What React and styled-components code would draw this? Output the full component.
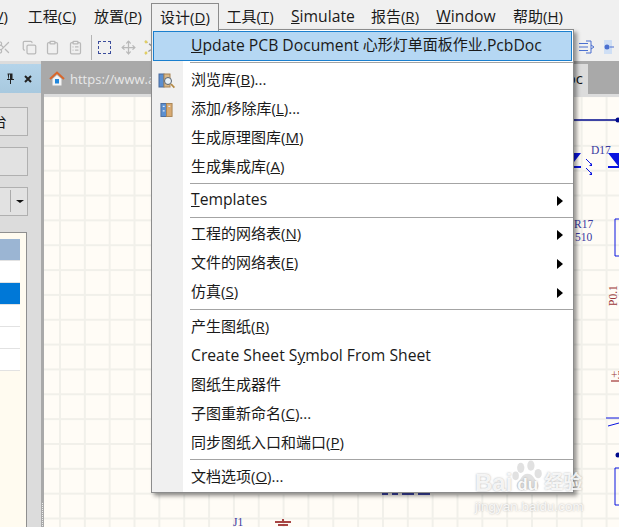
import React from 'react';
import styled, { createGlobalStyle } from 'styled-components';
import { Scissors, Copy, Clipboard, ClipboardList, Move } from 'lucide-react';

const GlobalStyle = createGlobalStyle`
	html, body {
		margin: 0;
		padding: 0;
		overflow: hidden;
		background: #f0f0f0;
	}
`;

const uiFont = `'Open Sans', 'Noto Sans CJK SC', sans-serif`;

const Page = styled.div`
	position: relative;
	width: 619px;
	height: 527px;
	overflow: hidden;
	display: flex;
	flex-direction: column;
	font-family: ${uiFont};
	color: #1a1a1a;
	background: #f0f0f0;
`;

const Latin = styled.span`
	font-size: 15.7px;
	vertical-align: -1px;
`;

const MenuBar = styled.div`
	height: 32px;
	flex: none;
	box-sizing: border-box;
	padding-bottom: 1px;
	display: flex;
	align-items: center;
	gap: 16px;
	margin-left: -13px;
	font-size: 15px;
	white-space: nowrap;
`;

const MenuTitle = styled.span`
	display: block;
	width: ${(p) => p.$width}px;
	text-align: center;
`;

const Toolbar = styled.div`
	height: 29px;
	flex: none;
	box-sizing: border-box;
	padding: 1px 5px 0 0;
	display: flex;
	align-items: center;
	gap: 8px;
	color: #b9b9b9;
`;

const CutIcon = styled(Scissors)`
	margin: 0 3px 0 -4px;
`;

const MoveIcon = styled(Move)`
	margin-left: 2px;
`;

const ToolbarDivider = styled.span`
	width: 1px;
	height: 25px;
	background: #b4b4b4;
`;

const SelectRect = styled.span`
	width: 13px;
	height: 13px;
	box-sizing: border-box;
	margin-left: -2px;
	border: 1px dashed #3b4c9c;
`;

const RightTools = styled.div`
	margin-left: auto;
	display: flex;
	align-items: center;
	gap: 9px;
`;

const Main = styled.div`
	flex: 1;
	min-height: 0;
	display: flex;
`;

const SidePanel = styled.aside`
	width: 41px;
	flex: none;
	display: flex;
	flex-direction: column;
	background: #dcdcdc;
	padding-top: 3px;
	box-sizing: border-box;
`;

const PanelTitle = styled.div`
	height: 29px;
	flex: none;
	display: flex;
	align-items: center;
	justify-content: flex-end;
	gap: 10px;
	padding-right: 9px;
	background: linear-gradient(180deg, #b4d4ea, #a8c9df);
	font-size: 11px;
	color: #222;
`;

const PanelButton = styled.div`
	width: 28px;
	height: 29px;
	margin-top: ${(p) => p.$top}px;
	flex: none;
	box-sizing: border-box;
	border: 1px solid #b0b0b0;
	border-left: 0;
	background: #e2e2e2;
	display: flex;
	align-items: center;
	overflow: hidden;
	font-size: 15px;
	padding-bottom: 2px;
`;

const ClippedLabel = styled.span`
	margin-left: -8px;
`;

const DropCaret = styled.span`
	width: 0;
	height: 0;
	margin: 2px 5px 0 5px;
	border-left: 4px solid transparent;
	border-right: 4px solid transparent;
	border-top: 3px solid #111;
`;

const CaretDivider = styled.span`
	width: 1px;
	height: 22px;
	margin-left: 10px;
	background: #fff;
	border-left: 1px solid #aaa;
`;

const ListBox = styled.div`
	width: 27px;
	flex: 1;
	margin-top: 16px;
	box-sizing: border-box;
	border: 1px solid #8f8f8f;
	border-left: 0;
	border-bottom: 0;
	background: #fffbf0;
	padding: 6px 6px 0 0;
`;

const ListRow = styled.div`
	height: 22px;
	box-sizing: border-box;
	background: ${(p) => p.$bg};
	border-bottom: 1px solid #e2e2e2;
`;

const Splitter = styled.div`
	width: 3px;
	flex: none;
	background:
		repeating-linear-gradient(180deg, #eee 0 1px, transparent 1px 2px) center bottom / 1px 24px no-repeat,
		#a9a9a9;
`;

const Document = styled.div`
	flex: 1;
	min-width: 0;
	display: flex;
	flex-direction: column;
`;

const TabStrip = styled.div`
	height: 33px;
	flex: none;
	display: flex;
	background: #a9a9a9;
`;

const HomeTab = styled.div`
	display: flex;
	align-items: center;
	gap: 5px;
	padding: 2px 0 0 5px;
	font-size: 13px;
	color: #e8e8e8;
	white-space: nowrap;
`;

const SheetTab = styled.div`
	margin-left: auto;
	margin-right: 31px;
	margin-top: 3px;
	width: 30px;
	background: #dcdcdc;
	font-size: 15px;
	display: flex;
	align-items: center;
	justify-content: flex-end;
	padding: 0 5px 2px 0;
	box-sizing: border-box;
	color: #111;
`;

const TabEdge = styled.div`
	height: 3px;
	flex: none;
	background: #dcdcdc;
`;

const Sheet = styled.div`
	flex: 1;
	position: relative;
	overflow: hidden;
	background-color: #fffcf6;
	background-image:
		linear-gradient(90deg, #f1f0ea 1.5px, transparent 1.5px),
		linear-gradient(180deg, #f1f0ea 1.5px, transparent 1.5px);
	background-size: 24.85px 24.85px;
	background-position: 15px 23px;
`;

const SchematicSvg = styled.svg`
	position: absolute;
	inset: 0;
	width: 575px;
	height: 430px;
`;

const Dropdown = styled.div`
	position: absolute;
	left: 151px;
	top: 29px;
	width: 423px;
	height: 464px;
	box-sizing: border-box;
	border: 1px solid #8c8c8c;
	background: linear-gradient(90deg, #f0f0f0 31px, #fff 31px);
	box-shadow: 3px 3px 4px rgba(0, 0, 0, 0.4);
	display: flex;
	flex-direction: column;
	font-size: 15px;
	white-space: nowrap;
`;

const OpenTitle = styled.div`
	position: absolute;
	left: 151px;
	top: 3px;
	width: 68px;
	height: 28px;
	box-sizing: border-box;
	border: 1px solid #8c8c8c;
	border-bottom: 0;
	background: #f0f0f0;
	font-size: 15px;
	text-align: center;
	line-height: 26px;
	z-index: 1;
	white-space: nowrap;
`;

const HighlightItem = styled.div`
	height: 30px;
	margin: 1px 1px 0;
	flex: none;
	box-sizing: border-box;
	border: 1px solid #1a7fce;
	background: #b5d7f3;
	display: flex;
	align-items: center;
	padding: 0 0 4px 37px;
`;

const Item = styled.div`
	height: 29px;
	flex: none;
	display: grid;
	grid-template-columns: 31px 1fr 16px;
	align-items: center;
`;

const ItemIcon = styled.span`
	display: flex;
	justify-content: center;
	padding-right: 2px;
`;

const ItemLabel = styled.span`
	padding: 0 0 4px 8px;
`;

const SubArrow = styled.span`
	width: 0;
	height: 0;
	border-top: 5px solid transparent;
	border-bottom: 5px solid transparent;
	border-left: 6px solid #000;
`;

const Separator = styled.div`
	height: 1px;
	flex: none;
	margin: ${(p) => p.$before}px 0 ${(p) => p.$after}px 38px;
	background: #a4a4a4;
`;

const Watermark = styled.div`
	position: absolute;
	left: 475px;
	top: 460px;
	width: 112px;
	color: rgba(255, 255, 255, 0.85);
	text-shadow: 0 0 2px rgba(110, 110, 110, 0.55);
	font-family: 'Liberation Sans', 'Noto Sans CJK SC', sans-serif;
	pointer-events: none;
	z-index: 3;
`;

const WatermarkLogo = styled.div`
	height: 36px;
	display: flex;
	align-items: flex-end;
	font-size: 24px;
	font-weight: 700;
	line-height: 26px;
`;

const PawMark = styled.span`
	position: relative;
	width: 32px;
	height: 36px;
	flex: none;
	color: rgba(215, 215, 215, 0.75);
`;

const PawText = styled.span`
	position: absolute;
	left: 5px;
	bottom: 2px;
	font-size: 17px;
	line-height: 18px;
	color: rgba(255, 255, 255, 0.95);
`;

const WatermarkCjk = styled.span`
	font-size: 19px;
	line-height: 26px;
`;

const WatermarkSub = styled.div`
	font-size: 13.5px;
	line-height: 16px;
	margin-top: 3px;
	white-space: nowrap;
`;

const BookIcon = () => (
	<svg width="13" height="16" viewBox="0 0 14 16">
		<rect x="1" y="1" width="6" height="14" fill="#5b8fd0" stroke="#48689a" />
		<rect x="7" y="1" width="6" height="14" fill="#d8aa72" stroke="#a88454" />
		<path d="M3 4h2M3 9h2M9 4h2" stroke="#dfe9f6" strokeWidth="1.4" />
	</svg>
);

const BrowseIcon = () => (
	<svg width="17" height="16" viewBox="0 0 17 16">
		<rect x="1" y="1" width="5" height="13" fill="#5b8fd0" stroke="#48689a" />
		<rect x="6" y="1" width="6" height="13" fill="#d8b98c" stroke="#a88454" />
		<circle cx="10" cy="8" r="3.5" fill="#e8f1f8" stroke="#59636e" />
		<path d="M13 11l3.4 3.6" stroke="#b48a45" strokeWidth="1.8" />
	</svg>
);

const HomeIcon = () => (
	<svg width="16" height="16" viewBox="0 0 16 16">
		<path d="M1 8l7-6.500L15 8" fill="none" stroke="#d9662a" strokeWidth="2" />
		<path d="M3.500 8L8 4l4.500 4v6.500h-9z" fill="#f4f4f4" />
		<rect x="6" y="8" width="4" height="4.500" fill="#1e86dc" />
	</svg>
);

const PinIcon = () => (
	<svg width="8" height="11" viewBox="0 0 8 11">
		<path d="M1.500 0.500h5v5.500h1.500v1h-3v4h-1v-4h-3v-1h1.500zM3 1.500v4.500h1v-4.500z" fill="#222" />
	</svg>
);

const CloseIcon = () => (
	<svg width="8" height="8" viewBox="0 0 8 8">
		<path d="M1 1l6 6M7 1l-6 6" stroke="#222" strokeWidth="2" />
	</svg>
);

const MarqueeIcon = () => (
	<svg width="11" height="15" viewBox="0 0 11 15">
		<path d="M1 1l9 6.500-9 6.500" fill="none" stroke="#999" strokeWidth="1.400" strokeDasharray="3 2" />
		<circle cx="2" cy="2" r="1.400" fill="#e2cf62" />
		<circle cx="2" cy="13" r="1.400" fill="#e2cf62" />
	</svg>
);

const PortListIcon = () => (
	<svg width="16" height="14" viewBox="0 0 16 14">
		<path d="M7 1h5v12H7M0 3.500h9M0 7h9M0 10.500h9M12 5l3 2-3 2" fill="none" stroke="#4a6fd0" />
	</svg>
);

const PortDotIcon = () => (
	<svg width="10" height="14" viewBox="0 0 10 14">
		<rect x="0" y="0" width="8" height="14" fill="#cfdff5" />
		<circle cx="3" cy="7" r="2.500" fill="#4a6fd0" />
		<path d="M6 7h4" stroke="#4a6fd0" />
	</svg>
);

const PawIcon = () => (
	<svg width="32" height="36" viewBox="0 0 44 48" fill="currentColor">
		<ellipse cx="12" cy="10" rx="5" ry="7" />
		<ellipse cx="26" cy="7" rx="5" ry="7" />
		<ellipse cx="5" cy="21" rx="4.500" ry="6" />
		<ellipse cx="36" cy="18" rx="5" ry="6.500" />
		<path d="M21 18c-7 0-9 8-13 12-4 5 0 12 7 11 4-1 8-2 12 0 8 2 12-5 8-11-5-5-6-12-14-12z" />
	</svg>
);

const Schematic = () => (
	<SchematicSvg viewBox="44 97 575 430">
		<g fontFamily="'Liberation Serif', serif" fontSize="11.500">
			<text x="591" y="154" fill="#3a3aa0">D17</text>
			<text x="574" y="228" fill="#3a3aa0">R17</text>
			<text x="575" y="241" fill="#3a3aa0">510</text>
			<text transform="translate(617 306) rotate(-90)" fill="#9c3a3a">P0.1</text>
			<text x="611" y="379" fill="#9c3a3a">+5</text>
			<text x="233" y="526" fill="#3a3aa0">J1</text>
		</g>
		<path d="M611 381h8" stroke="#8c0a0a" />
		<path d="M574 120h45" stroke="#000a8c" strokeWidth="1.500" />
		<circle cx="618" cy="120" r="2.500" fill="#000a8c" />
		<path d="M574 153h7l-7 9zM574 166h7v2h-7zM608 153h11v14zM608 166h11v2h-11z" fill="#0a14e0" />
		<path d="M586 159l5 5M586 168l5 5" stroke="#0a14e0" />
		<path d="M589 166h3v-3zM589 175h3v-3z" fill="#0a14e0" />
		<path d="M619 219h-4v37h4M619 468h-4v37h4" fill="none" stroke="#0a14e0" />
		<path d="M606 418h13" stroke="#0a14e0" />
		<path d="M608 426l11-3" stroke="#0a14e0" />
		<circle cx="618" cy="455" r="2.500" fill="#000a8c" />
		<path d="M382 494h6M392 494h6M402 494h12M418 494h12" stroke="#000a8c" strokeWidth="1.500" />
		<path d="M283 519v2M275 522h16M278 525h10" stroke="#8c0a0a" strokeWidth="1.500" />
	</SchematicSvg>
);

const firstGroup = [
	['浏览库', 'B', '...', <BrowseIcon key="browse" />],
	['添加/移除库', 'L', '...', <BookIcon key="book" />],
	['生成原理图库', 'M', ''],
	['生成集成库', 'A', ''],
];

const netlistGroup = [
	['工程的网络表', 'N'],
	['文件的网络表', 'E'],
	['仿真', 'S'],
];

const App = () => (
	<Page>
		<GlobalStyle />
		<MenuBar>
			<MenuTitle $width={24}>
				(<u>V</u>)
			</MenuTitle>
			<MenuTitle $width={50}>
				工程(<u>C</u>)
			</MenuTitle>
			<MenuTitle $width={50}>
				放置(<u>P</u>)
			</MenuTitle>
			<MenuTitle $width={50}>&nbsp;</MenuTitle>
			<MenuTitle $width={50}>
				工具(<u>T</u>)
			</MenuTitle>
			<MenuTitle $width={63}>
				<Latin>
					<u>S</u>imulate
				</Latin>
			</MenuTitle>
			<MenuTitle $width={50}>
				报告(<u>R</u>)
			</MenuTitle>
			<MenuTitle $width={60}>
				<Latin>
					<u>W</u>indow
				</Latin>
			</MenuTitle>
			<MenuTitle $width={52}>
				帮助(<u>H</u>)
			</MenuTitle>
		</MenuBar>
		<Toolbar>
			<CutIcon size={15} strokeWidth={2} />
			<Copy size={15} />
			<Clipboard size={15} />
			<ClipboardList size={15} />
			<ToolbarDivider />
			<SelectRect />
			<MoveIcon size={15} />
			<MarqueeIcon />
			<RightTools>
				<PortListIcon />
				<PortDotIcon />
			</RightTools>
		</Toolbar>
		<Main>
			<SidePanel>
				<PanelTitle>
					<PinIcon />
					<CloseIcon />
				</PanelTitle>
				<PanelButton $top={14}>
					<ClippedLabel>台</ClippedLabel>
				</PanelButton>
				<PanelButton $top={11} />
				<PanelButton $top={11}>
					<CaretDivider />
					<DropCaret />
				</PanelButton>
				<ListBox>
					<ListRow $bg="#9bb5d3" />
					<ListRow $bg="#fff" />
					<ListRow $bg="#0078d7" />
					<ListRow $bg="#fff" />
					<ListRow $bg="#fff" />
					<ListRow $bg="#fff" />
				</ListBox>
			</SidePanel>
			<Splitter />
			<Document>
				<TabStrip>
					<HomeTab>
						<HomeIcon />
						https://www.a
					</HomeTab>
					<SheetTab>oc</SheetTab>
				</TabStrip>
				<TabEdge />
				<Sheet>
					<Schematic />
				</Sheet>
			</Document>
		</Main>
		<OpenTitle>
			设计(<u>D</u>)
		</OpenTitle>
		<Dropdown>
			<HighlightItem>
				<span>
					<Latin>
						<u>U</u>pdate PCB Document
					</Latin>{' '}
					心形灯单面板作业<Latin>.PcbDoc</Latin>
				</span>
			</HighlightItem>
			<Separator $before={1} $after={3} />
			{firstGroup.map(([label, key, tail, icon]) => (
				<Item key={label}>
					<ItemIcon>{icon}</ItemIcon>
					<ItemLabel>
						{label}(<u>{key}</u>){tail}
					</ItemLabel>
				</Item>
			))}
			<Separator $before={1} $after={2} />
			<Item>
				<ItemIcon />
				<ItemLabel>
					<Latin>
						<u>T</u>emplates
					</Latin>
				</ItemLabel>
				<SubArrow />
			</Item>
			<Separator $before={2} $after={2} />
			{netlistGroup.map(([label, key]) => (
				<Item key={label}>
					<ItemIcon />
					<ItemLabel>
						{label}(<u>{key}</u>)
					</ItemLabel>
					<SubArrow />
				</Item>
			))}
			<Separator $before={2} $after={3} />
			<Item>
				<ItemIcon />
				<ItemLabel>
					产生图纸(<u>R</u>)
				</ItemLabel>
			</Item>
			<Item>
				<ItemIcon />
				<ItemLabel>
					<Latin>
						Create Sheet S<u>y</u>mbol From Sheet
					</Latin>
				</ItemLabel>
			</Item>
			<Item>
				<ItemIcon />
				<ItemLabel>图纸生成器件</ItemLabel>
			</Item>
			<Item>
				<ItemIcon />
				<ItemLabel>
					子图重新命名(<u>C</u>)...
				</ItemLabel>
			</Item>
			<Item>
				<ItemIcon />
				<ItemLabel>
					同步图纸入口和端口(<u>P</u>)
				</ItemLabel>
			</Item>
			<Separator $before={1} $after={3} />
			<Item>
				<ItemIcon />
				<ItemLabel>
					文档选项(<u>O</u>)...
				</ItemLabel>
			</Item>
		</Dropdown>
		<Watermark>
			<WatermarkLogo>
				Bai
				<PawMark>
					<PawIcon />
					<PawText>du</PawText>
				</PawMark>
				<WatermarkCjk>经验</WatermarkCjk>
			</WatermarkLogo>
			<WatermarkSub>jingyan.baidu.com</WatermarkSub>
		</Watermark>
	</Page>
);

export default App;
